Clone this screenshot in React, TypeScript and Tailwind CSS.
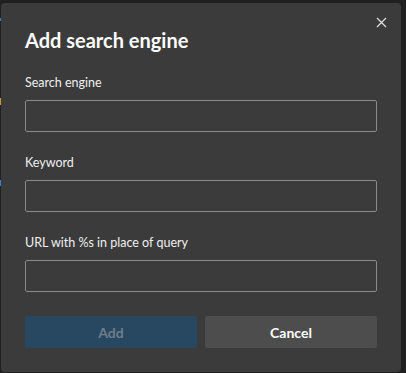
import React from 'react';

const fields = ['Search engine', 'Keyword', 'URL with %s in place of query'];

const App: React.FC = () => {
  return (
    <div
      className="relative w-[406px] h-[373px] bg-[#202020] pt-[3px] pl-[1px] overflow-hidden"
      style={{ fontFamily: 'Lato, "Noto Sans", sans-serif' }}
    >
      {/* bits of the page behind the dialog */}
      <div className="absolute left-0 top-[18px] w-[1px] h-[3px] bg-[#3a7bd5]" />
      <div className="absolute left-0 top-[98px] w-[1px] h-[7px] bg-[#c79a2a]" />
      <div className="absolute left-0 top-[180px] w-[1px] h-[6px] bg-[#3a7bd5]" />

      <div className="relative w-[400px] h-[369px] rounded-[4px] bg-[#3b3b3b] px-6 pt-[23px]">
        <button className="absolute right-[14px] top-[13px] w-[12px] h-[12px] flex items-center justify-center text-[#e0e0e0]">
          <svg width="11" height="11" viewBox="0 0 11 11" fill="none">
            <path d="M1 1L10 10M10 1L1 10" stroke="currentColor" strokeWidth="1.2" />
          </svg>
        </button>

        <h1 className="text-[20px] leading-[28px] font-bold text-white">Add search engine</h1>

        <div className="mt-[19px] flex flex-col gap-[21px]">
          {fields.map((label) => (
            <div key={label} className="flex flex-col">
              <label className="text-[12.5px] leading-[20px] text-[#f0f0f0]">{label}</label>
              <input
                className="mt-[7px] h-[32px] w-full rounded-[2px] border border-[#8a8a8a] bg-transparent px-2 text-[13px] text-white outline-none"
              />
            </div>
          ))}
        </div>

        <div className="mt-[24px] flex gap-[8px]">
          <button className="flex-1 h-[32px] rounded-[2px] bg-[#284861] text-[14px] font-bold text-[#6f7d8a]">
            Add
          </button>
          <button className="flex-1 h-[32px] rounded-[2px] bg-[#4d4d4d] text-[14px] font-bold text-white">
            Cancel
          </button>
        </div>
      </div>
    </div>
  );
};

export default App;
